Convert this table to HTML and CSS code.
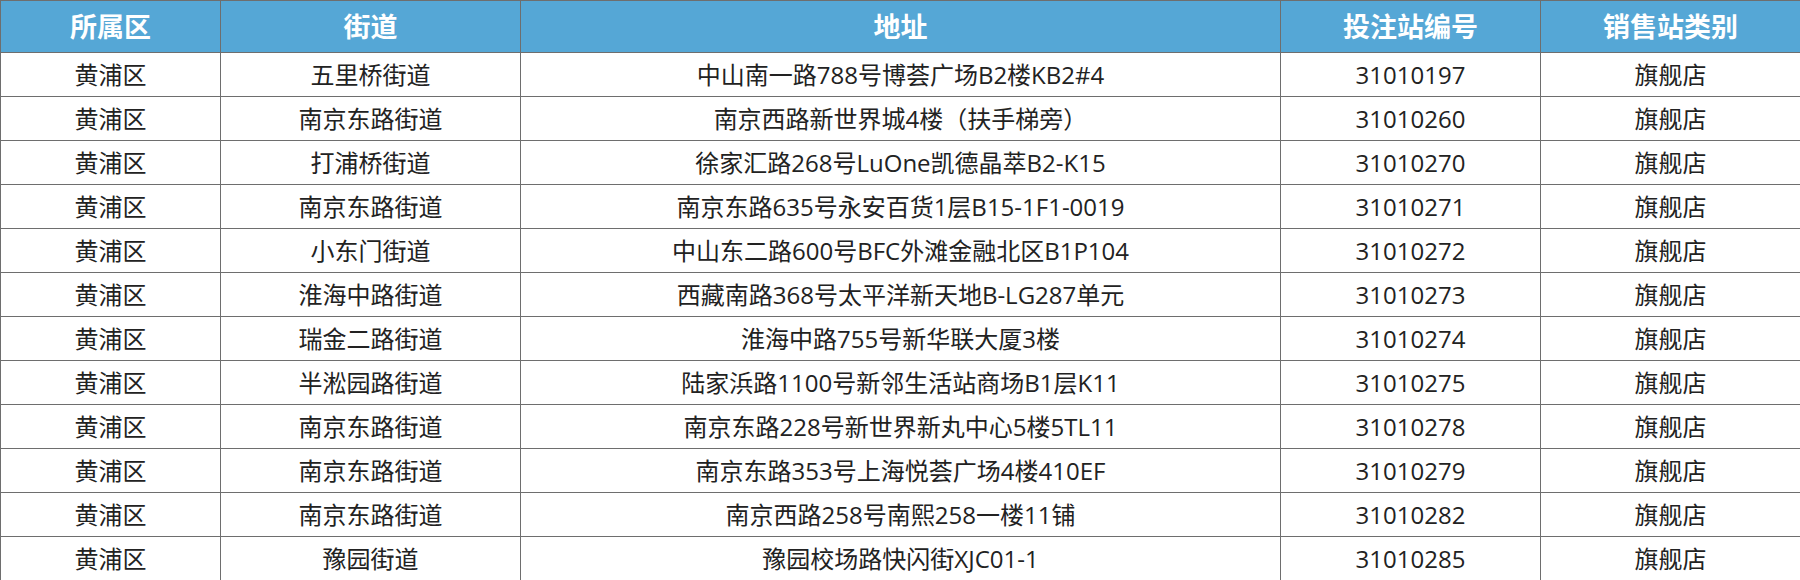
FILE: index.html
```html
<!DOCTYPE html>
<html lang="zh-CN">
<head>
<meta charset="utf-8">
<title>销售站列表</title>
<link rel="stylesheet" href="styles.css">
</head>
<body>
<table class="stations">
  <colgroup>
    <col class="c-district">
    <col class="c-street">
    <col class="c-address">
    <col class="c-code">
    <col class="c-type">
  </colgroup>
  <thead>
    <tr><th>所属区</th><th>街道</th><th>地址</th><th>投注站编号</th><th>销售站类别</th></tr>
  </thead>
  <tbody>
    <tr><td>黄浦区</td><td>五里桥街道</td><td>中山南一路788号博荟广场B2楼KB2#4</td><td>31010197</td><td>旗舰店</td></tr>
    <tr><td>黄浦区</td><td>南京东路街道</td><td>南京西路新世界城4楼（扶手梯旁）</td><td>31010260</td><td>旗舰店</td></tr>
    <tr><td>黄浦区</td><td>打浦桥街道</td><td>徐家汇路268号LuOne凯德晶萃B2-K15</td><td>31010270</td><td>旗舰店</td></tr>
    <tr><td>黄浦区</td><td>南京东路街道</td><td>南京东路635号永安百货1层B15-1F1-0019</td><td>31010271</td><td>旗舰店</td></tr>
    <tr><td>黄浦区</td><td>小东门街道</td><td>中山东二路600号BFC外滩金融北区B1P104</td><td>31010272</td><td>旗舰店</td></tr>
    <tr><td>黄浦区</td><td>淮海中路街道</td><td>西藏南路368号太平洋新天地B-LG287单元</td><td>31010273</td><td>旗舰店</td></tr>
    <tr><td>黄浦区</td><td>瑞金二路街道</td><td>淮海中路755号新华联大厦3楼</td><td>31010274</td><td>旗舰店</td></tr>
    <tr><td>黄浦区</td><td>半淞园路街道</td><td>陆家浜路1100号新邻生活站商场B1层K11</td><td>31010275</td><td>旗舰店</td></tr>
    <tr><td>黄浦区</td><td>南京东路街道</td><td>南京东路228号新世界新丸中心5楼5TL11</td><td>31010278</td><td>旗舰店</td></tr>
    <tr><td>黄浦区</td><td>南京东路街道</td><td>南京东路353号上海悦荟广场4楼410EF</td><td>31010279</td><td>旗舰店</td></tr>
    <tr><td>黄浦区</td><td>南京东路街道</td><td>南京西路258号南熙258一楼11铺</td><td>31010282</td><td>旗舰店</td></tr>
    <tr><td>黄浦区</td><td>豫园街道</td><td>豫园校场路快闪街XJC01-1</td><td>31010285</td><td>旗舰店</td></tr>
  </tbody>
</table>
</body>
</html>
```
FILE: styles.css
```css
html, body {
  margin: 0;
  padding: 0;
  background: #ffffff;
}

body {
  font-family: "Open Sans", "Noto Sans CJK SC", sans-serif;
  color: #222222;
}

.stations {
  width: 1800px;
  border-collapse: collapse;
  table-layout: fixed;
}

.c-district { width: 220px; }
.c-street { width: 300px; }
.c-address { width: 760px; }
.c-code { width: 260px; }
.c-type { width: 260px; }

.stations th,
.stations td {
  border: 1px solid #6e6e6e;
  text-align: center;
  padding: 0;
  white-space: nowrap;
}

.stations th {
  height: 51px;
  background: #55a7d6;
  color: #ffffff;
  font-size: 27px;
  font-weight: 700;
  line-height: 1;
}

.stations td {
  height: 43px;
  font-size: 24px;
  line-height: 1;
  font-weight: 400;
}
```
